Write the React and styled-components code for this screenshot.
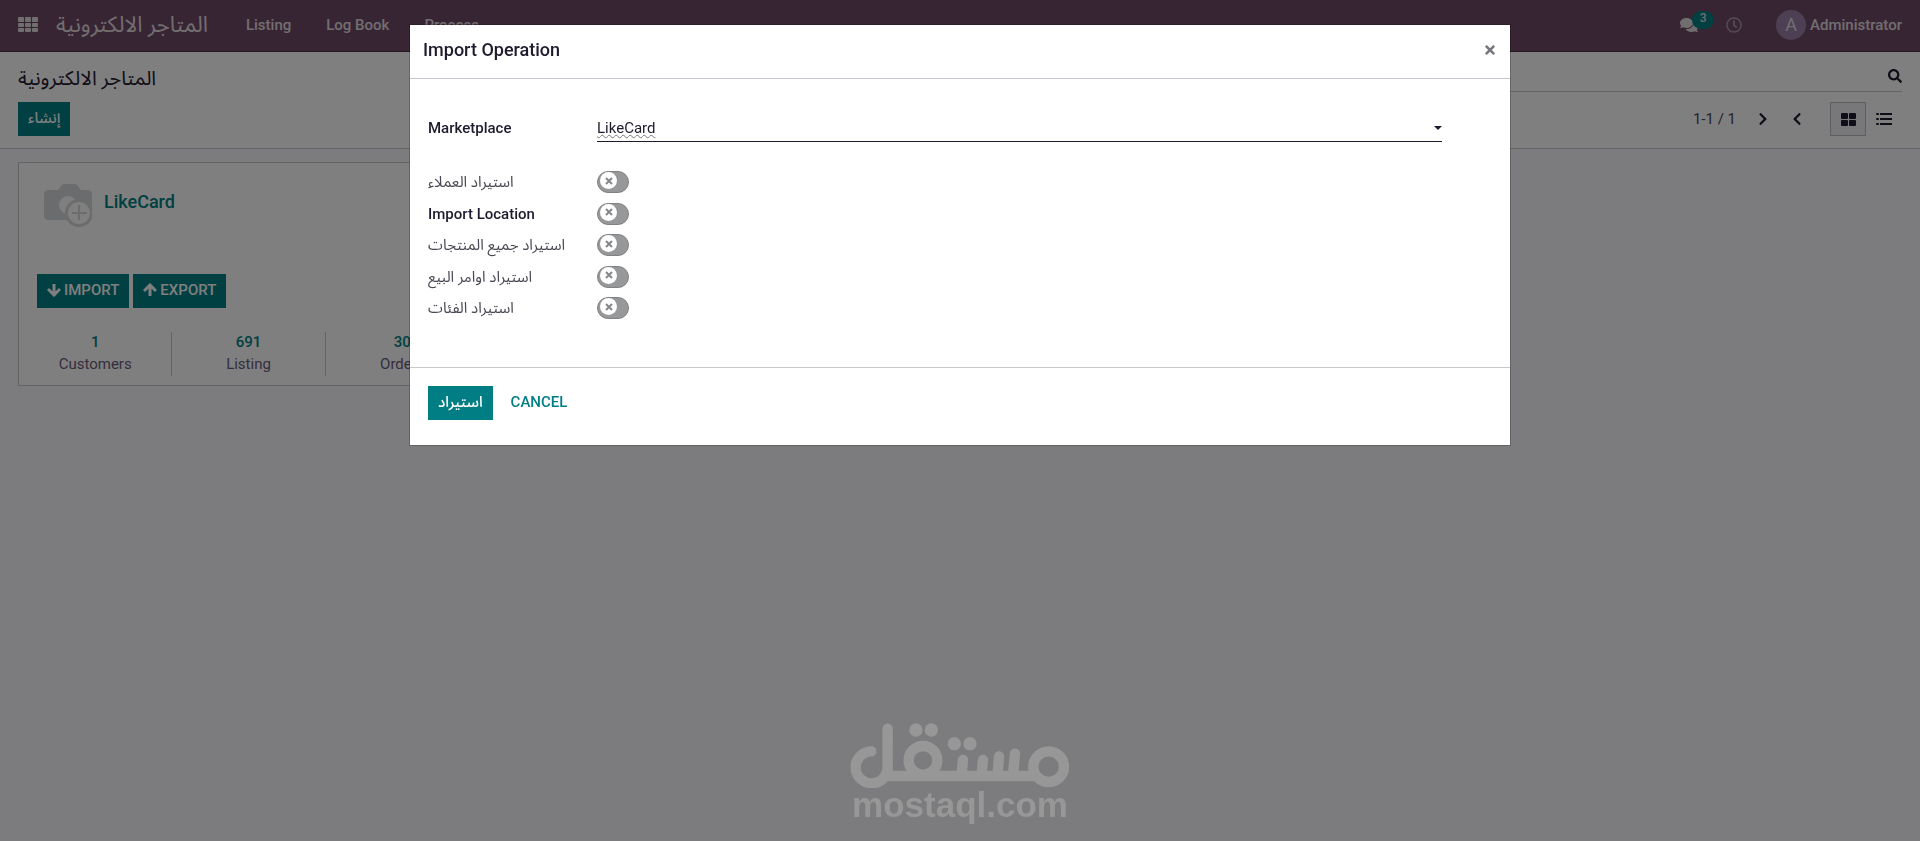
import { useState } from 'react'
import styled, { createGlobalStyle } from 'styled-components'
import {
    FaChevronLeft, FaChevronRight, FaComments, FaRegClock, FaSearch, FaTimes
} from 'react-icons/fa'

const GlobalStyle = createGlobalStyle`
    * {
        box-sizing: border-box;
    }

    body {
        margin: 0;
        background: #f8f7fa;
        color: #1f1a2e;
        font-family: Roboto, "Noto Sans Arabic", "DejaVu Sans", sans-serif;
        font-size: 15px;
        line-height: 22px;
    }

    button, input {
        font: inherit;
        color: inherit;
    }

    a {
        text-decoration: none;
    }
`

const Page = styled.div`
    min-height: 100vh;
`

const Navbar = styled.nav`
    display: flex;
    align-items: center;
    height: 52px;
    padding: 0 18px 2px;
    background: #714b67;
    border-bottom: 1px solid #4a2f44;
    color: #e2dde1;
`

const IconButton = styled.button`
    display: flex;
    align-items: center;
    justify-content: center;
    padding: 0;
    border: 0;
    background: none;
    font-size: ${props => props.$size || 16}px;
    color: ${props => props.$color || 'inherit'};
`

const Brand = styled.a`
    margin: 0 38px 0 18px;
    color: inherit;
    font-size: 22px;
    line-height: 28px;
`

const NavLinks = styled.div`
    display: flex;
    gap: 35px;
`

const NavLink = styled.a`
    color: inherit;
    font-weight: 500;
`

const Systray = styled.div`
    display: flex;
    align-items: center;
    margin-left: auto;
`

const Messages = styled.div`
    position: relative;
    margin-right: 28px;
`

const Badge = styled.span`
    position: absolute;
    top: -5px;
    left: 12px;
    width: 22px;
    height: 18px;
    border-radius: 9px;
    background: #017e84;
    font-size: 12px;
    font-weight: 500;
    line-height: 14px;
    text-align: center;
`

const User = styled.button`
    display: flex;
    align-items: center;
    gap: 4px;
    margin-left: 34px;
    padding: 0;
    border: 0;
    background: none;
    font-weight: 500;
`

const Avatar = styled.span`
    width: 30px;
    height: 30px;
    border-radius: 50%;
    background: #9a7fa8;
    font-size: 18px;
    font-weight: 400;
    line-height: 30px;
`

const ControlPanel = styled.header`
    display: grid;
    grid-template-columns: 1fr 1fr;
    grid-template-rows: 32px 34px;
    row-gap: 10px;
    height: 97px;
    padding: 8px 18px 0;
    background: #fff;
    border-bottom: 1px solid #c8c8cc;
`

const Breadcrumb = styled.h1`
    align-self: end;
    margin: 0;
    font-size: 20px;
    font-weight: 400;
    line-height: 28px;
`

const SearchBox = styled.div`
    display: flex;
    align-items: center;
    height: 32px;
    border-bottom: 1px solid #c8c8cc;
`

const SearchInput = styled.input`
    flex: 1;
    border: 0;
    outline: 0;
    background: none;
`

const PanelActions = styled.div`
    display: flex;
    align-items: center;
    justify-content: ${props => props.$end ? 'flex-end' : 'flex-start'};
    height: 34px;
`

const PagerText = styled.span`
    margin-right: 20px;
    color: #4c4356;
`

const Pager = styled.div`
    display: flex;
    gap: 20px;
    margin-right: 26px;
`

const ViewButton = styled.button`
    display: flex;
    align-items: center;
    justify-content: center;
    width: 36px;
    height: 34px;
    padding: 0;
    border: 1px solid ${props => props.$active ? '#bdbdc2' : 'transparent'};
    background: ${props => props.$active ? '#f0eff4' : 'none'};
`

const PrimaryButton = styled.button`
    display: inline-flex;
    align-items: center;
    gap: 3px;
    height: 34px;
    padding: 0 10px 2px;
    border: 0;
    background: #017e84;
    color: #fff;
    font-weight: 500;
    text-transform: uppercase;
`

const LinkButton = styled.button`
    height: 34px;
    padding: 0 0 2px;
    border: 0;
    background: none;
    color: #017e84;
    font-weight: 500;
    text-transform: uppercase;
`

const Kanban = styled.main`
    padding: 13px 18px;
`

const Card = styled.article`
    width: 462px;
    height: 224px;
    border: 1px solid #c8c8cc;
    background: #fff;
`

const CardHead = styled.div`
    display: flex;
    gap: 12px;
    height: 111px;
    padding: 20px 25px 0;
`

const CardTitle = styled.h2`
    margin: 7px 0 0;
    color: #017e84;
    font-size: 18px;
    font-weight: 500;
    line-height: 24px;
`

const CardActions = styled.div`
    display: flex;
    gap: 4px;
    padding: 0 18px;
`

const Stats = styled.div`
    display: grid;
    grid-template-columns: repeat(3, 1fr);
    margin-top: 24px;
`

const Stat = styled.a`
    height: 44px;
    border-right: 1px solid #c8c8cc;
    color: #6b5b7b;
    text-align: center;

    &:last-child {
        border-right: 0;
    }
`

const StatValue = styled.span`
    display: block;
    color: #017e84;
    font-weight: 500;
    line-height: 21px;
`

const Overlay = styled.div`
    position: fixed;
    inset: 0;
    padding: 25px 16px;
    background: rgba(0, 0, 0, 0.5);
`

const Dialog = styled.section`
    max-width: 1100px;
    margin: 0 auto;
    background: #fff;
    box-shadow: 0 0 0 1px rgba(0, 0, 0, 0.2);
`

const DialogHead = styled.header`
    display: flex;
    align-items: center;
    justify-content: space-between;
    height: 54px;
    padding: 0 13px 4px;
    border-bottom: 1px solid #c9c8d0;
`

const DialogTitle = styled.h2`
    margin: 0;
    font-size: 18px;
    font-weight: 500;
    line-height: 24px;
`

const DialogBody = styled.form`
    padding: 34px 68px 48px 18px;
`

const Field = styled.div`
    display: grid;
    grid-template-columns: 169px 1fr;
    align-items: center;
    color: ${props => props.$muted ? '#4a4852' : 'inherit'};
    font-weight: ${props => props.$muted ? 400 : 500};
`

const SelectBox = styled.div`
    display: flex;
    align-items: center;
    height: 29px;
    padding-top: 2px;
    border-bottom: 1px solid #1f1a2e;
`

const SelectInput = styled.input`
    flex: 1;
    padding: 0;
    border: 0;
    outline: 0;
    background: none;
    font-weight: 400;
    text-decoration: underline wavy #777 1px;
`

const Caret = styled.span`
    border: 4px solid transparent;
    border-top-color: #1f1a2e;
    border-bottom: 0;
`

const ToggleList = styled.div`
    display: flex;
    flex-direction: column;
    justify-content: space-between;
    height: 148px;
    margin-top: 29px;
`

const Switch = styled.span`
    position: relative;
    display: block;
    width: 32px;
    height: 22px;
`

const SwitchInput = styled.input`
    display: block;
    appearance: none;
    width: 32px;
    height: 22px;
    margin: 0;
    border: 1px solid #808284;
    border-radius: 11px;
    background: #979899;

    &:checked {
        border-color: #017e84;
        background: #017e84;
    }
`

const Knob = styled.span`
    position: absolute;
    top: 1px;
    left: ${props => props.$on ? 12 : 3}px;
    display: flex;
    align-items: center;
    justify-content: center;
    width: 17px;
    height: 17px;
    border-radius: 50%;
    background: #fff;
    color: #85888a;
    pointer-events: none;
`

const DialogFoot = styled.footer`
    display: flex;
    gap: 18px;
    height: 78px;
    padding: 18px;
    border-top: 1px solid #c9c9cb;
`

const Watermark = styled.div`
    position: absolute;
    bottom: 19px;
    left: 50%;
    width: 220px;
    margin-left: -110px;
    color: #979798;
    font-family: "Liberation Sans", Arial, sans-serif;
    font-size: 35px;
    font-weight: 700;
    line-height: 34px;
    text-align: center;

    svg {
        display: block;
    }
`

const CameraIcon = () => (
    <svg width="48" height="44" viewBox="0 0 48 44" aria-hidden="true">
        <path d="M5 7h9l4-5q1-1 2-1h11q1 0 2 1l4 5h6q5 0 5 5v20q0 5-5 5H5q-5 0-5-5V12q0-5 5-5z" fill="#d6d8da" />
        <circle cx="24" cy="22" r="9" fill="#fff" />
        <circle cx="35" cy="30" r="14" fill="#d6d8da" />
        <circle cx="35" cy="30" r="11" fill="#fff" />
        <path d="M35 22v15M28 30h15" stroke="#d6d8da" strokeWidth="2" />
    </svg>
)

const AppsIcon = () => (
    <svg width="20" height="16" viewBox="0 0 20 16" fill="currentColor" aria-hidden="true">
        {[0, 7, 14].map(x => [0, 6, 11].map(y => (
            <rect key={`${x}-${y}`} x={x} y={y} width="6" height={y === 0 ? 5 : 4} rx="1" />
        )))}
    </svg>
)

const ArrowIcon = ({ up }) => (
    <svg width="14" height="14" viewBox="0 0 14 14" fill="none" stroke="currentColor" strokeWidth="3" aria-hidden="true">
        <path d={up ? 'M7 13V3M1 8l6-6 6 6' : 'M7 1v10M1 6l6 6 6-6'} />
    </svg>
)

const KanbanIcon = () => (
    <svg width="15" height="13" viewBox="0 0 15 13" fill="currentColor" aria-hidden="true">
        <rect width="7" height="6" rx="1" />
        <rect x="8" width="7" height="6" rx="1" />
        <rect y="7" width="7" height="6" rx="1" />
        <rect x="8" y="7" width="7" height="6" rx="1" />
    </svg>
)

const ListIcon = () => (
    <svg width="16" height="12" viewBox="0 0 16 12" fill="currentColor" aria-hidden="true">
        {[0, 5, 10].map(y => (
            <g key={y}>
                <rect y={y} width="3" height="2" rx="1" />
                <rect x="4" y={y} width="12" height="2" />
            </g>
        ))}
    </svg>
)

const CrossIcon = ({ size }) => (
    <svg width={size} height={size} viewBox="0 0 8 8" stroke="currentColor" strokeWidth="2" aria-hidden="true">
        <path d="M1 1l6 6M7 1L1 7" />
    </svg>
)

const WatermarkLogo = () => (
    <svg width="220" height="65" viewBox="88 98 660 195" fill="none" stroke="currentColor"
        strokeWidth="31" strokeLinecap="round" aria-hidden="true">
        <circle cx="684" cy="229" r="46" />
        <path d="M190 257H650" strokeLinecap="butt" />
        <path d="M583 190L577 250M535 198L531 250M487 209L483 250M427 209L423 250" />
        <circle cx="307" cy="210" r="43" />
        <path d="M201 115V230A48 48 0 1 1 152 183" />
        <g fill="currentColor" stroke="none">
            <circle cx="401" cy="160" r="20" />
            <circle cx="448" cy="160" r="20" />
            <circle cx="286" cy="119" r="20" />
            <circle cx="332" cy="119" r="20" />
        </g>
    </svg>
)

const stats = [
    { value: '1', label: 'Customers' },
    { value: '691', label: 'Listing' },
    { value: '30', label: 'Orders' }
]

const imports = [
    { id: 'customers', label: 'استيراد العملاء', muted: true },
    { id: 'location', label: 'Import Location' },
    { id: 'products', label: 'استيراد جميع المنتجات', muted: true },
    { id: 'orders', label: 'استيراد اوامر البيع', muted: true },
    { id: 'categories', label: 'استيراد الفئات', muted: true }
]

const Toggle = ({ id }) => {
    const [on, setOn] = useState(false)

    return (
        <Switch>
            <SwitchInput id={id} type="checkbox" checked={on} onChange={() => setOn(!on)} />
            <Knob $on={on}>{!on && <CrossIcon size={8} />}</Knob>
        </Switch>
    )
}

const ImportDialog = () => (
    <Dialog role="dialog" aria-labelledby="dialog-title">
        <DialogHead>
            <DialogTitle id="dialog-title">Import Operation</DialogTitle>
            <IconButton $size={14} $color="#77757d" aria-label="Close"><FaTimes /></IconButton>
        </DialogHead>
        <DialogBody>
            <Field>
                <label htmlFor="marketplace">Marketplace</label>
                <SelectBox>
                    <SelectInput id="marketplace" type="text" role="combobox" aria-expanded="false" defaultValue="LikeCard" />
                    <Caret />
                </SelectBox>
            </Field>
            <ToggleList>
                {imports.map(({ id, label, muted }) => (
                    <Field key={id} $muted={muted}>
                        <label htmlFor={id}>{label}</label>
                        <Toggle id={id} />
                    </Field>
                ))}
            </ToggleList>
        </DialogBody>
        <DialogFoot>
            <PrimaryButton>استيراد</PrimaryButton>
            <LinkButton>Cancel</LinkButton>
        </DialogFoot>
    </Dialog>
)

const App = () => (
    <Page>
        <GlobalStyle />
        <Navbar>
            <IconButton aria-label="Apps"><AppsIcon /></IconButton>
            <Brand href="#">المتاجر الالكترونية</Brand>
            <NavLinks>
                <NavLink href="#">Listing</NavLink>
                <NavLink href="#">Log Book</NavLink>
                <NavLink href="#">Process</NavLink>
            </NavLinks>
            <Systray>
                <Messages>
                    <IconButton $size={18} aria-label="Messages"><FaComments /></IconButton>
                    <Badge>3</Badge>
                </Messages>
                <IconButton $size={16} $color="#a994ae" aria-label="Activities"><FaRegClock /></IconButton>
                <User>
                    <Avatar>A</Avatar>
                    Administrator
                </User>
            </Systray>
        </Navbar>
        <ControlPanel>
            <Breadcrumb>المتاجر الالكترونية</Breadcrumb>
            <SearchBox>
                <SearchInput type="search" aria-label="Search" />
                <IconButton $size={14} aria-label="Search"><FaSearch /></IconButton>
            </SearchBox>
            <PanelActions>
                <PrimaryButton>إنشاء</PrimaryButton>
            </PanelActions>
            <PanelActions $end>
                <PagerText>1-1 / 1</PagerText>
                <Pager>
                    <IconButton $size={14} aria-label="Next"><FaChevronRight /></IconButton>
                    <IconButton $size={14} aria-label="Previous"><FaChevronLeft /></IconButton>
                </Pager>
                <ViewButton $active aria-label="Kanban"><KanbanIcon /></ViewButton>
                <ViewButton aria-label="List"><ListIcon /></ViewButton>
            </PanelActions>
        </ControlPanel>
        <Kanban>
            <Card>
                <CardHead>
                    <CameraIcon />
                    <CardTitle>LikeCard</CardTitle>
                </CardHead>
                <CardActions>
                    <PrimaryButton><ArrowIcon />Import</PrimaryButton>
                    <PrimaryButton><ArrowIcon up />Export</PrimaryButton>
                </CardActions>
                <Stats>
                    {stats.map(({ value, label }) => (
                        <Stat key={label} href="#">
                            <StatValue>{value}</StatValue>
                            {label}
                        </Stat>
                    ))}
                </Stats>
            </Card>
        </Kanban>
        <Overlay>
            <ImportDialog />
            <Watermark>
                <WatermarkLogo />
                mostaql.com
            </Watermark>
        </Overlay>
    </Page>
)

export default App
